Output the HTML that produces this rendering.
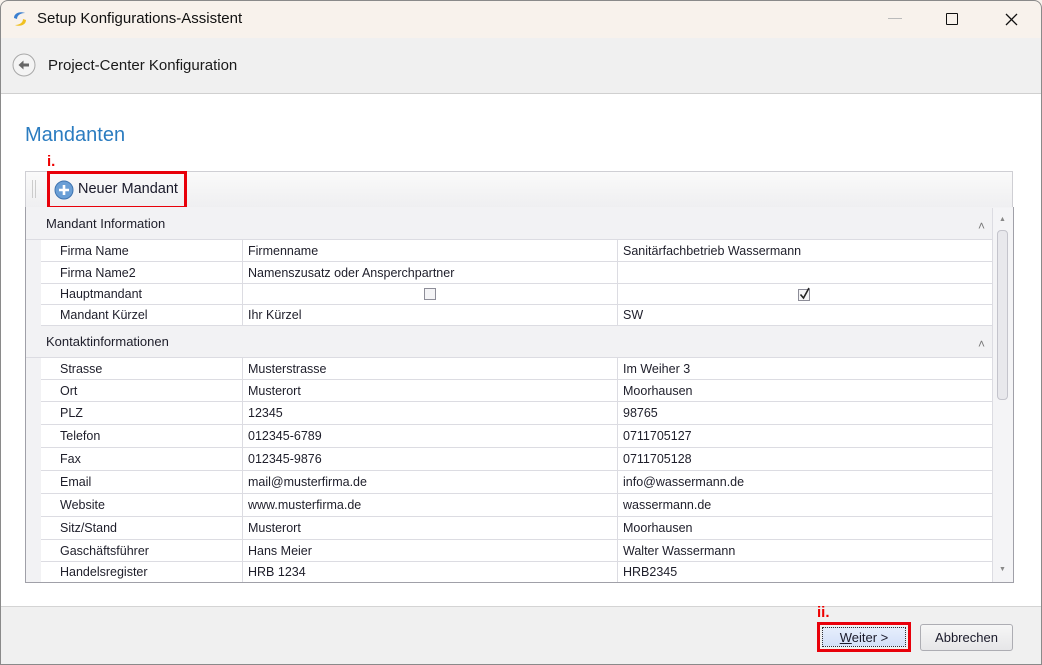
<!DOCTYPE html>
<html><head><meta charset="utf-8">
<style>
*{margin:0;padding:0;box-sizing:border-box}
body{width:1042px;height:665px;position:relative;overflow:hidden;background:#fff;font-family:"Liberation Sans",sans-serif;color:#222}
.a{position:absolute}
.row{position:absolute;left:41px;width:951px;border-bottom:1px solid #dcdce2}
.row div{position:absolute;top:0;bottom:0;font-size:12.5px;white-space:nowrap;color:#1e1e2a;display:flex;align-items:center}
.c1{left:0;width:202px;padding-left:19px;border-right:1px solid #dcdce2}
.c2{left:202px;width:375px;padding-left:5px;border-right:1px solid #dcdce2}
.c3{left:577px;width:374px;padding-left:5px}
.grp{position:absolute;left:26px;width:966px;background:#f2f2f4;border-bottom:1px solid #dcdce2;font-size:13px;color:#1e1e2a;padding-left:20px;display:flex;align-items:center}
.chev{position:absolute;right:7px;font-size:12px;color:#777;top:11px}
</style></head><body>
<div class="a" style="left:0;top:0;width:1042px;height:665px;border:1px solid #8a8a8a;border-radius:8px 8px 0 0;z-index:10;pointer-events:none"></div>
<div class="a" style="left:0;top:0;width:1042px;height:38px;background:#f8f2ec"></div>
<svg class="a" style="left:11px;top:10px" width="18" height="18" viewBox="0 0 18 18"><path d="M3 8 C3 3,9 1,14 3 C10 3,6 5,6 9Z" fill="#3a7fd0"/><path d="M15 10 C15 15,9 17,4 15 C8 15,12 13,12 9Z" fill="#f0c020"/></svg>
<div class="a" style="left:37px;top:10px;font-size:15px;color:#111">Setup Konfigurations-Assistent</div>
<div class="a" style="left:888px;top:18px;width:14px;height:1px;background:#bbb"></div>
<div class="a" style="left:946px;top:13px;width:12px;height:12px;border:1.5px solid #111;border-radius:1px"></div>
<svg class="a" style="left:1005px;top:13px" width="13" height="13"><path d="M1 1L12 12M12 1L1 12" stroke="#111" stroke-width="1.3"/></svg>
<div class="a" style="left:0;top:38px;width:1042px;height:56px;background:#f0f0f0;border-bottom:1px solid #d0d0d0"></div>
<svg class="a" style="left:12px;top:53px" width="24" height="24" viewBox="0 0 24 24"><circle cx="12" cy="12" r="11" fill="#f4f4f4" stroke="#a8a8a8"/><path d="M6.5 12L11.5 7.5V10.5H17V13.5H11.5V16.5Z" fill="#666"/></svg>
<div class="a" style="left:48px;top:57px;font-size:15px;color:#1a1a1a">Project-Center Konfiguration</div>
<div class="a" style="left:25px;top:124px;font-size:20px;color:#2b7cc0">Mandanten</div>
<div class="a" style="left:47px;top:153px;font-size:15px;color:#e00;font-weight:bold">i.</div>
<div class="a" style="left:25px;top:171px;width:988px;height:37px;background:linear-gradient(#fafafa,#efeff1);border:1px solid #cfcfd4;border-bottom:1px solid #a0a0a8"></div>
<div class="a" style="left:32px;top:180px;width:1px;height:18px;background:#ccc"></div>
<div class="a" style="left:35px;top:180px;width:1px;height:18px;background:#ccc"></div>
<div class="a" style="left:47px;top:171px;width:140px;height:38px;border:3px solid #e8000a"></div>
<svg class="a" style="left:54px;top:180px" width="20" height="20" viewBox="0 0 20 20"><circle cx="10" cy="10" r="9" fill="#6a9fd6" stroke="#3f74b0"/><path d="M10 5V15M5 10H15" stroke="#fff" stroke-width="2.6"/></svg>
<div class="a" style="left:78px;top:181px;font-size:14.5px;color:#1a1a2a">Neuer Mandant</div>
<div class="a" style="left:25px;top:207px;width:989px;height:376px;border:1px solid #a0a0a8;border-top:none;background:#f2f2f4"></div>
<div class="grp" style="top:208px;height:32px">Mandant Information<span class="chev">&#708;</span></div>
<div class="row" style="top:240px;height:22px;background:#fff"><div class="c1">Firma Name</div><div class="c2">Firmenname</div><div class="c3">Sanitärfachbetrieb Wassermann</div></div>
<div class="row" style="top:262px;height:22px;background:#fff"><div class="c1">Firma Name2</div><div class="c2">Namenszusatz oder Ansperchpartner</div><div class="c3"></div></div>
<div class="row" style="top:284px;height:21px;background:#fff"><div class="c1">Hauptmandant</div><div class="c2" style="justify-content:center;padding:0"><span style="width:12px;height:12px;border:1px solid #8d8d98;background:#f4f4f6;display:block"></span></div><div class="c3" style="justify-content:center;padding:0"><svg width="14" height="14"><rect x="0.5" y="2.5" width="11" height="11" fill="#f4f4f6" stroke="#8d8d98"/><path d="M2.5 7.5L5.5 11L11 1" stroke="#222" stroke-width="1.6" fill="none"/></svg></div></div>
<div class="row" style="top:305px;height:21px;background:#fff"><div class="c1">Mandant Kürzel</div><div class="c2">Ihr Kürzel</div><div class="c3">SW</div></div>
<div class="grp" style="top:326px;height:32px">Kontaktinformationen<span class="chev">&#708;</span></div>
<div class="row" style="top:358px;height:22px;background:#fff"><div class="c1">Strasse</div><div class="c2">Musterstrasse</div><div class="c3">Im Weiher 3</div></div>
<div class="row" style="top:380px;height:22px;background:#fff"><div class="c1">Ort</div><div class="c2">Musterort</div><div class="c3">Moorhausen</div></div>
<div class="row" style="top:402px;height:23px;background:#fff"><div class="c1">PLZ</div><div class="c2">12345</div><div class="c3">98765</div></div>
<div class="row" style="top:425px;height:23px;background:#fff"><div class="c1">Telefon</div><div class="c2">012345-6789</div><div class="c3">0711705127</div></div>
<div class="row" style="top:448px;height:23px;background:#fff"><div class="c1">Fax</div><div class="c2">012345-9876</div><div class="c3">0711705128</div></div>
<div class="row" style="top:471px;height:23px;background:#fff"><div class="c1">Email</div><div class="c2">mail@musterfirma.de</div><div class="c3">info@wassermann.de</div></div>
<div class="row" style="top:494px;height:23px;background:#fff"><div class="c1">Website</div><div class="c2">www.musterfirma.de</div><div class="c3">wassermann.de</div></div>
<div class="row" style="top:517px;height:23px;background:#fff"><div class="c1">Sitz/Stand</div><div class="c2">Musterort</div><div class="c3">Moorhausen</div></div>
<div class="row" style="top:540px;height:22px;background:#fff"><div class="c1">Gaschäftsführer</div><div class="c2">Hans Meier</div><div class="c3">Walter Wassermann</div></div>
<div class="row" style="top:562px;height:20px;background:#fff;border-bottom:none"><div class="c1">Handelsregister</div><div class="c2">HRB 1234</div><div class="c3">HRB2345</div></div>
<div class="a" style="left:992px;top:208px;width:21px;height:374px;background:#f4f4f6;border-left:1px solid #dcdce2"></div>
<div class="a" style="left:997px;top:230px;width:11px;height:170px;background:#e8e8ec;border:1px solid #c4c4cc;border-radius:4px"></div>
<div class="a" style="left:999px;top:216px;font-size:7px;color:#888">&#9650;</div>
<div class="a" style="left:999px;top:566px;font-size:7px;color:#888">&#9660;</div>
<div class="a" style="left:0;top:606px;width:1042px;height:59px;background:#f0f0f0;border-top:1px solid #d4d4d4"></div>
<div class="a" style="left:817px;top:604px;font-size:15px;color:#e00;font-weight:bold">ii.</div>
<div class="a" style="left:817px;top:622px;width:94px;height:30px;border:3px solid #e8000a;padding:2px">
<div style="width:100%;height:100%;background:linear-gradient(#e6eefc,#d4e0f8);border:1px dotted #333;font-size:13px;display:flex;align-items:center;justify-content:center;color:#1a1a2a"><span><u>W</u>eiter &gt;</span></div></div>
<div class="a" style="left:920px;top:624px;width:93px;height:27px;background:linear-gradient(#f6f6f6,#e6e6e8);border:1px solid #adadb3;border-radius:3px;font-size:13px;display:flex;align-items:center;justify-content:center;color:#1a1a2a">Abbrechen</div>
</body></html>
